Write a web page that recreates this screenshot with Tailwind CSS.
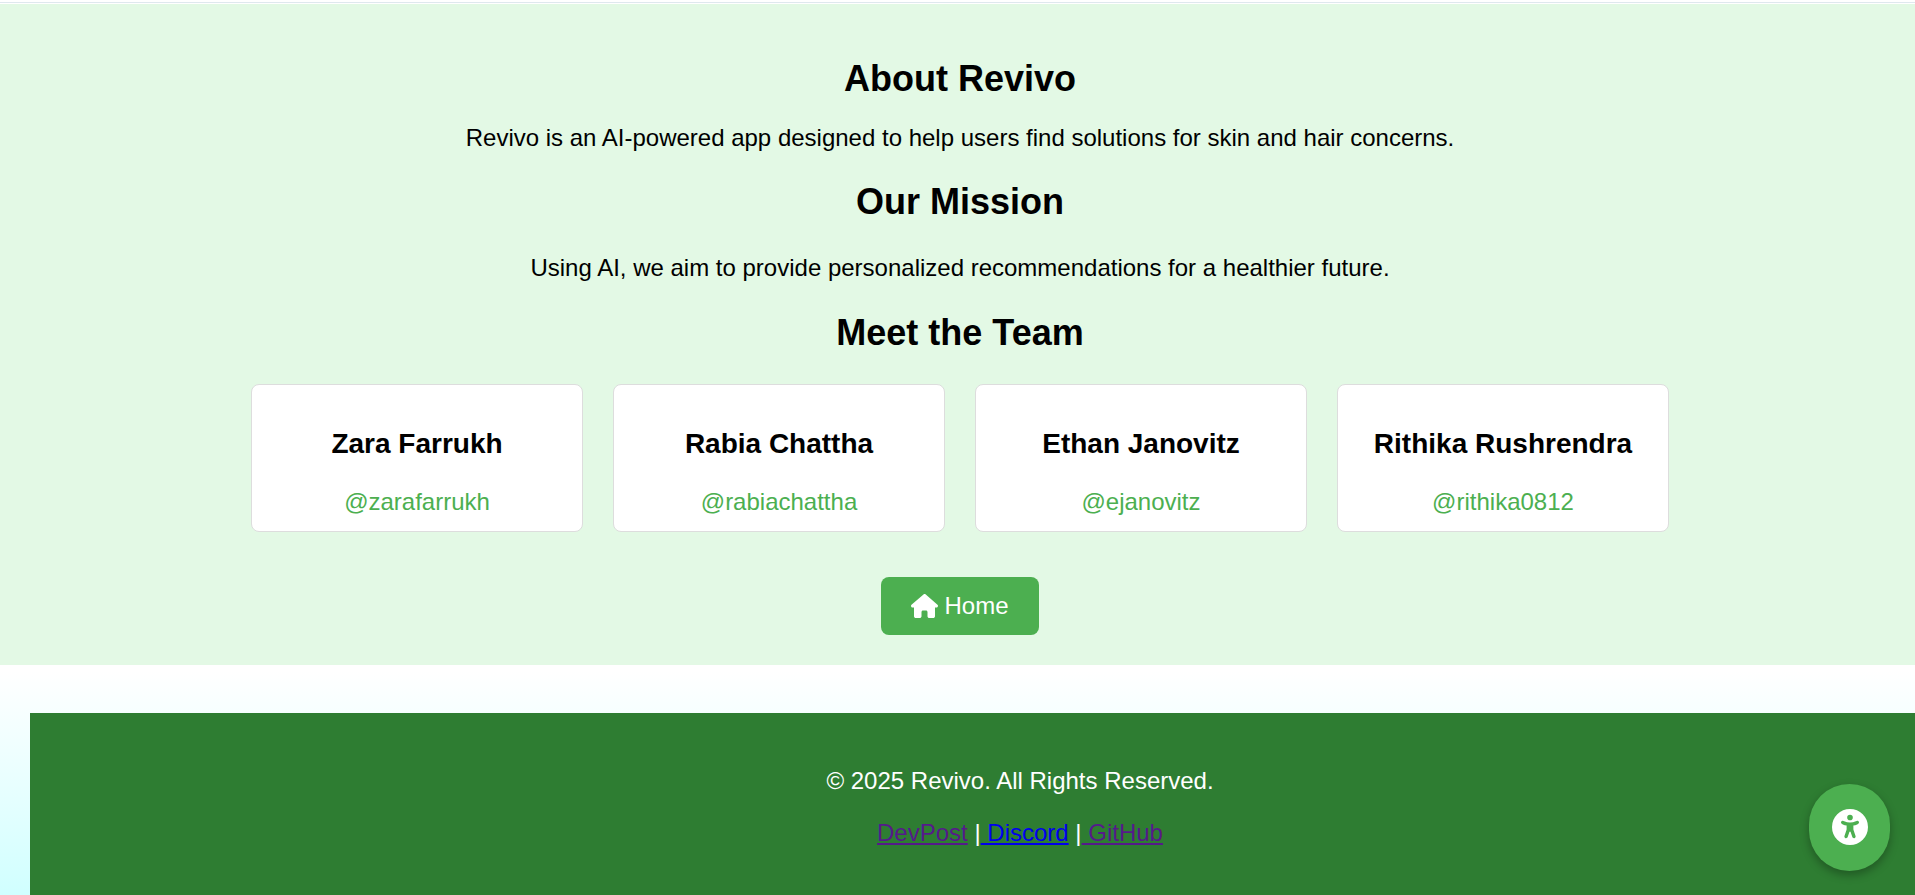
<!DOCTYPE html>
<html lang="en">
<head>
  <meta charset="UTF-8">
  <title>About Revivo</title>
  <script src="https://cdn.jsdelivr.net/npm/@tailwindcss/browser@4"></script>
</head>
<body class="h-[895px] overflow-hidden bg-linear-to-b from-white from-75% to-[#d0ffff] font-['Liberation_Sans',Arial,sans-serif] text-black">
  <div class="w-[1920px]">
    <!-- Thin rule above the section -->
    <div class="mt-[2px] h-[1px] bg-[#dfe8ee]"></div>

    <!-- About section -->
    <section class="mt-[1px] h-[661px] bg-[#e3f9e5] pt-[54px] text-center">
      <h1 class="text-[36px] leading-[41px] font-bold">About Revivo</h1>
      <p class="mt-[25px] text-[24px] leading-[28px]">Revivo is an AI-powered app designed to help users find solutions for skin and hair concerns.</p>
      <h2 class="mt-[29px] text-[36px] leading-[41px] font-bold">Our Mission</h2>
      <p class="mt-[32px] text-[24px] leading-[28px]">Using AI, we aim to provide personalized recommendations for a healthier future.</p>
      <h2 class="mt-[30px] text-[36px] leading-[41px] font-bold">Meet the Team</h2>

      <div class="mt-[31px] flex justify-center gap-[30px]">
        <div class="flex h-[148px] w-[332px] flex-col items-center rounded-[8px] border border-[#ddd] bg-white pt-[43px]">
          <h3 class="text-[28px] leading-[32px] font-bold">Zara Farrukh</h3>
          <a class="mt-[28px] text-[24px] leading-[28px] text-[#4caf50]" href="#">@zarafarrukh</a>
        </div>
        <div class="flex h-[148px] w-[332px] flex-col items-center rounded-[8px] border border-[#ddd] bg-white pt-[43px]">
          <h3 class="text-[28px] leading-[32px] font-bold">Rabia Chattha</h3>
          <a class="mt-[28px] text-[24px] leading-[28px] text-[#4caf50]" href="#">@rabiachattha</a>
        </div>
        <div class="flex h-[148px] w-[332px] flex-col items-center rounded-[8px] border border-[#ddd] bg-white pt-[43px]">
          <h3 class="text-[28px] leading-[32px] font-bold">Ethan Janovitz</h3>
          <a class="mt-[28px] text-[24px] leading-[28px] text-[#4caf50]" href="#">@ejanovitz</a>
        </div>
        <div class="flex h-[148px] w-[332px] flex-col items-center rounded-[8px] border border-[#ddd] bg-white pt-[43px]">
          <h3 class="text-[28px] leading-[32px] font-bold">Rithika Rushrendra</h3>
          <a class="mt-[28px] text-[24px] leading-[28px] text-[#4caf50]" href="#">@rithika0812</a>
        </div>
      </div>

      <a href="#" class="mt-[45px] inline-flex h-[58px] w-[158px] items-center justify-center gap-[6px] rounded-[8px] bg-[#4caf50] text-[24px] text-white">
        <svg class="h-[24px] w-[27px] fill-white" viewBox="0 0 576 512"><path d="M575.8 255.5c0 18-15 32.1-32 32.1h-32l.7 160.2c0 2.7-.2 5.4-.5 8.1V472c0 22.1-17.9 40-40 40H456c-1.1 0-2.2 0-3.3-.1c-1.4 .1-2.8 .1-4.2 .1H416 392c-22.1 0-40-17.9-40-40V448 384c0-17.7-14.3-32-32-32H256c-17.7 0-32 14.3-32 32v64 24c0 22.1-17.9 40-40 40H160 128.1c-1.5 0-3-.1-4.5-.2c-1.2 .1-2.4 .2-3.6 .2H104c-22.1 0-40-17.9-40-40V360c0-.9 0-1.9 .1-2.8V287.6H32c-18 0-32-14-32-32.1c0-9 3-17 10-24L266.4 8c7-7 15-8 22-8s15 2 21 7L564.8 231.5c8 7 12 15 11 24z"/></svg>
        <span>Home</span>
      </a>
    </section>

    <!-- Footer -->
    <footer class="mt-[48px] ml-[30px] h-[300px] w-[1980px] bg-[#2e7d32] pt-[54px] text-center text-[24px] leading-[28px] text-white">
      <p>© 2025 Revivo. All Rights Reserved.</p>
      <p class="mt-[24px]"><a class="text-[#551a8b] underline" href="#">DevPost</a> |<a class="text-[#0000ee] underline" href="#"> Discord</a> |<a class="text-[#551a8b] underline" href="#"> GitHub</a></p>
    </footer>
  </div>

  <!-- Accessibility button -->
  <button class="fixed top-[784px] left-[1809px] flex h-[87px] w-[81px] items-center justify-center rounded-full bg-[#4caf50] shadow-[0_4px_10px_rgba(0,0,0,0.3)]">
    <svg class="mb-[2px] h-[36px] w-[36px] fill-white" viewBox="0 0 512 512"><path d="M0 256a256 256 0 1 1 512 0A256 256 0 1 1 0 256zm161.5-86.1c-12.2-5.2-26.3 .4-31.5 12.6s.4 26.3 12.6 31.5l11.9 5.1c17.3 7.4 35.2 12.9 53.6 16.3v50.1c0 4.3-.7 8.6-2.1 12.6l-28.7 86.1c-4.2 12.6 2.6 26.2 15.2 30.4s26.2-2.6 30.4-15.2l24.4-73.2c1.3-3.8 4.8-6.4 8.8-6.4s7.6 2.6 8.8 6.4l24.4 73.2c4.2 12.6 17.8 19.4 30.4 15.2s19.4-17.8 15.2-30.4l-28.7-86.1c-1.4-4.1-2.1-8.3-2.1-12.6V235.5c18.4-3.5 36.3-8.9 53.6-16.3l11.9-5.1c12.2-5.2 17.8-19.3 12.6-31.5s-19.3-17.8-31.5-12.6L338.7 175c-26.1 11.2-54.2 17-82.7 17s-56.5-5.8-82.7-17l-11.9-5.1zM256 160a40 40 0 1 0 0-80 40 40 0 1 0 0 80z"/></svg>
  </button>
</body>
</html>
